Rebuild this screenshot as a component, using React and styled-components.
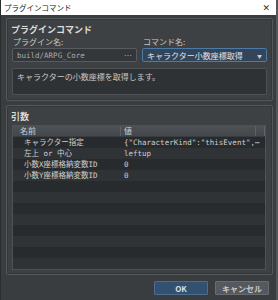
import React from 'react';
import styled, { createGlobalStyle } from 'styled-components';

const GlobalStyle = createGlobalStyle`
  html, body {
    margin: 0;
    padding: 0;
    background: #3a3d40;
  }
  body {
    font-family: 'Noto Sans CJK JP', 'Noto Sans', sans-serif;
  }
`;

const Window = styled.div`
  width: 278px;
  height: 300px;
  box-sizing: border-box;
  display: flex;
  flex-direction: column;
  background: #3a3d40;
  border-left: 1px solid #2a2c2e;
  border-right: 2px solid #55585b;
  overflow: hidden;
`;

const TitleBar = styled.div`
  height: 15px;
  flex: none;
  display: flex;
  align-items: center;
  justify-content: space-between;
  background: #ffffff;
  padding: 0 6px 0 3px;
  font-size: 7.5px;
  color: #222;
`;

const Close = styled.span`
  font-family: 'DejaVu Sans', sans-serif;
  font-size: 9px;
  color: #333;
`;

const Body = styled.div`
  flex: 1;
  display: flex;
  flex-direction: column;
  padding: 3px 3px 0 5px;
  gap: 4px;
`;

const Group = styled.div`
  box-sizing: border-box;
  height: ${(p) => p.$h}px;
  flex: none;
  display: flex;
  flex-direction: column;
  background: #3e4144;
  border: 1px solid #55595c;
  border-radius: 2px;
  box-shadow: inset 0 0 0 1px #34373a;
  padding: 5px 5px 4px 5px;
`;

const GroupTitle = styled.div`
  font-size: 9px;
  font-weight: bold;
  color: #dcdcdc;
  line-height: 11px;
  margin-left: -1px;
`;

const FieldRow = styled.div`
  display: flex;
  gap: 5px;
  margin-top: 2px;
`;

const Field = styled.div`
  flex: 1;
  display: flex;
  flex-direction: column;
`;

const Label = styled.div`
  font-size: 8px;
  color: #c8c8c8;
  line-height: 10px;
  padding-left: 1px;
  margin-bottom: 1px;
`;

const Input = styled.div`
  box-sizing: border-box;
  height: 14px;
  display: flex;
  align-items: center;
  justify-content: space-between;
  padding: 0 4px;
  border-radius: 2px;
  font-size: 8px;
  color: ${(p) => (p.$select ? '#e2e6ea' : '#a8abae')};
  background: ${(p) => (p.$select ? '#33455a' : '#34373a')};
  border: 1px solid ${(p) => (p.$select ? '#4d7aa6' : '#585c60')};
`;

const Mono = styled.span`
  font-family: 'DejaVu Sans Mono', 'Noto Sans CJK JP', monospace;
  font-size: 7.5px;
`;

const Arrow = styled.span`
  font-size: 5px;
  color: #c8ccd0;
`;

const Desc = styled.div`
  box-sizing: border-box;
  height: 27px;
  margin-top: 6px;
  background: #2f3235;
  border: 1px solid #4e5255;
  border-radius: 2px;
  padding: 2px 4px;
  font-size: 8px;
  color: #c8c8c8;
  line-height: 11px;
`;

const Table = styled.div`
  box-sizing: border-box;
  flex: 1;
  margin-top: 3px;
  margin-right: 1px;
  display: flex;
  flex-direction: column;
  background: #2a2d30;
  border: 1px solid #4e5255;
  overflow: hidden;
`;

const HeaderRow = styled.div`
  display: grid;
  grid-template-columns: 108px 1fr 9px;
  height: 10px;
  flex: none;
  background: linear-gradient(#4d5155, #44474b);
  border-bottom: 1px solid #3a3d40;
`;

const HeadCell = styled.div`
  font-size: 8px;
  line-height: 10px;
  color: #d0d0d0;
  padding-left: ${(p) => p.$pad}px;
  border-right: 1px solid #5e6266;
`;

const Row = styled.div`
  display: grid;
  grid-template-columns: 108px 1fr;
  height: 11px;
  flex: none;
  background: ${(p) => (p.$odd ? '#2f3336' : '#282b2e')};
`;

const Cell = styled.div`
  font-family: 'DejaVu Sans Mono', 'Noto Sans CJK JP', monospace;
  font-size: 7.5px;
  line-height: 11px;
  color: #cfcfcf;
  padding-left: ${(p) => p.$pad}px;
  white-space: nowrap;
  overflow: hidden;
`;

const Buttons = styled.div`
  display: flex;
  justify-content: flex-end;
  gap: 7px;
  padding: 2px 4px 0 0;
`;

const Button = styled.div`
  box-sizing: border-box;
  width: 54px;
  height: 14px;
  display: flex;
  align-items: center;
  justify-content: center;
  font-size: 8px;
  font-weight: bold;
  border-radius: 1px;
  color: ${(p) => (p.$primary ? '#d8dde2' : '#c8c8c8')};
  background: ${(p) => (p.$primary ? '#33506f' : '#55585c')};
  border: 1px solid ${(p) => (p.$primary ? '#4a6d92' : '#696d71')};
`;

const rows = [
  ['キャラクター指定', '{"CharacterKind":"thisEvent",⋯'],
  ['左上 or 中心', 'leftup'],
  ['小数X座標格納変数ID', '0'],
  ['小数Y座標格納変数ID', '0'],
];

export default function App() {
  const filled = [...rows];
  while (filled.length < 12) filled.push(['', '']);

  return (
    <>
      <GlobalStyle />
      <Window>
        <TitleBar>
          <span>プラグインコマンド</span>
          <Close>✕</Close>
        </TitleBar>
        <Body>
          <Group $h={83}>
            <GroupTitle>プラグインコマンド</GroupTitle>
            <FieldRow>
              <Field>
                <Label>プラグイン名:</Label>
                <Input>
                  <Mono>build/ARPG_Core</Mono>
                  <span>⋯</span>
                </Input>
              </Field>
              <Field>
                <Label>コマンド名:</Label>
                <Input $select>
                  <span>キャラクター小数座標取得</span>
                  <Arrow>▼</Arrow>
                </Input>
              </Field>
            </FieldRow>
            <Desc>キャラクターの小数座標を取得します。</Desc>
          </Group>
          <Group $h={170}>
            <GroupTitle>引数</GroupTitle>
            <Table>
              <HeaderRow>
                <HeadCell $pad={7}>名前</HeadCell>
                <HeadCell $pad={3}>値</HeadCell>
                <HeadCell $pad={0} />
              </HeaderRow>
              {filled.map((r, i) => (
                <Row key={i} $odd={i % 2 === 1}>
                  <Cell $pad={11}>{r[0]}</Cell>
                  <Cell $pad={3}>{r[1]}</Cell>
                </Row>
              ))}
            </Table>
          </Group>
          <Buttons>
            <Button $primary>OK</Button>
            <Button>キャンセル</Button>
          </Buttons>
        </Body>
      </Window>
    </>
  );
}
